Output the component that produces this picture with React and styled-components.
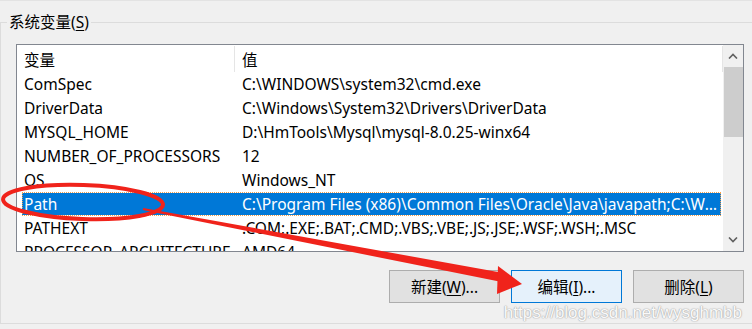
import React from "react";
import styled, { createGlobalStyle } from "styled-components";

const GlobalStyle = createGlobalStyle`
  html, body {
    margin: 0;
    padding: 0;
    background: #f0f0f0;
  }
  body {
    width: 752px;
    height: 329px;
    overflow: hidden;
    font-family: "Noto Sans", "Noto Sans CJK SC", sans-serif;
  }
`;

const vars = [
  ["ComSpec", "C:\\WINDOWS\\system32\\cmd.exe"],
  ["DriverData", "C:\\Windows\\System32\\Drivers\\DriverData"],
  ["MYSQL_HOME", "D:\\HmTools\\Mysql\\mysql-8.0.25-winx64"],
  ["NUMBER_OF_PROCESSORS", "12"],
  ["OS", "Windows_NT"],
  ["Path", "C:\\Program Files (x86)\\Common Files\\Oracle\\Java\\javapath;C:\\WINDOWS\\system32;C:\\WINDOWS"],
  ["PATHEXT", ".COM;.EXE;.BAT;.CMD;.VBS;.VBE;.JS;.JSE;.WSF;.WSH;.MSC"],
  ["PROCESSOR_ARCHITECTURE", "AMD64"],
];

export default function App() {
  return (
    <Page>
      <GlobalStyle />
      <Group>
        <Legend>
          系统变量(<u>S</u>)
        </Legend>
        <ListView>
          <ListContent>
            <Header>
              <HeadCell>变量</HeadCell>
              <HeadCell>值</HeadCell>
            </Header>
            {vars.map(([name, value]) => (
              <Row key={name} selected={name === "Path"}>
                <NameCell>{name}</NameCell>
                <ValueCell>{value}</ValueCell>
              </Row>
            ))}
          </ListContent>
          <ScrollBar>
            <ArrowBtn>
              <svg width="10" height="6" viewBox="0 0 10 6">
                <polyline points="1,5.5 5,1.5 9,5.5" fill="none" stroke="#606060" strokeWidth="1.6" />
              </svg>
            </ArrowBtn>
            <Thumb />
            <Track />
            <ArrowBtn>
              <svg width="10" height="6" viewBox="0 0 10 6">
                <polyline points="1,0.5 5,4.5 9,0.5" fill="none" stroke="#606060" strokeWidth="1.6" />
              </svg>
            </ArrowBtn>
          </ScrollBar>
        </ListView>
        <ButtonRow>
          <Button>
            新建(<u>W</u>)...
          </Button>
          <Button primary>
            编辑(<u>I</u>)...
          </Button>
          <Button>
            删除(<u>L</u>)
          </Button>
        </ButtonRow>
      </Group>
      <Watermark>https://blog.csdn.net/wysghmbb</Watermark>
      <Annotation width="752" height="329" viewBox="0 0 752 329">
        <ellipse
          cx="83"
          cy="201"
          rx="80"
          ry="17"
          fill="none"
          stroke="#f0231b"
          strokeWidth="4"
          transform="rotate(2 83 201)"
        />
        <polygon
          points="143.2,207 500.7,271.5 499.3,280.5 142.8,209"
          fill="#f0231b"
        />
        <polygon points="498,265 522,283 497,293" fill="#f0231b" />
      </Annotation>
    </Page>
  );
}

const Page = styled.div`
  position: relative;
  width: 752px;
  height: 329px;
  box-sizing: border-box;
  border-top: 1px solid #e3e3e3;
`;

const Group = styled.div`
  display: flex;
  flex-direction: column;
  margin-top: 21px;
  height: 302px;
  box-sizing: border-box;
  border: 1px solid #dcdcdc;
  border-right: none;
`;

const Legend = styled.div`
  align-self: flex-start;
  margin: -11px 0 0 6px;
  padding: 0 2px;
  background: #f0f0f0;
  font-size: 15.5px;
  line-height: 20px;
  color: #000;

  u {
    text-underline-offset: 2px;
  }
`;

const ListView = styled.div`
  display: grid;
  grid-template-columns: 1fr 20px;
  margin: 12px 8px 0 15px;
  height: 208px;
  box-sizing: border-box;
  border: 1px solid #828790;
  background: #fff;
`;

const ListContent = styled.div`
  overflow: hidden;
  font-size: 15.5px;
  color: #000;
`;

const Header = styled.div`
  display: grid;
  grid-template-columns: 218px 1fr;
  height: 27px;
`;

const HeadCell = styled.div`
  display: flex;
  align-items: center;
  padding: 2px 0 0 7px;
  margin-top: 1px;
  border-right: 1px solid #e5e5e5;
  line-height: 20px;
`;

const Row = styled.div`
  display: grid;
  grid-template-columns: 213px 1fr;
  margin-left: 5px;
  width: 699px;
  height: 24px;
  box-sizing: border-box;
  border-top: 1px solid transparent;
  border-bottom: 1px solid transparent;
  background-clip: padding-box;
  line-height: 22px;
  background-color: ${(p) => (p.selected ? "#0078d7" : "transparent")};
  color: ${(p) => (p.selected ? "#fff" : "#000")};
  outline: ${(p) => (p.selected ? "1px dotted #f0a050" : "none")};
  outline-offset: -1px;
`;

const NameCell = styled.div`
  padding-left: 2px;
  white-space: nowrap;
  overflow: hidden;
`;

const ValueCell = styled.div`
  padding: 0 1px 0 7px;
  white-space: nowrap;
  overflow: hidden;
  text-overflow: ellipsis;
`;

const ScrollBar = styled.div`
  display: flex;
  flex-direction: column;
  background: #f0f0f0;
`;

const ArrowBtn = styled.div`
  display: flex;
  align-items: center;
  justify-content: center;
  height: 22px;
  flex: none;
`;

const Thumb = styled.div`
  height: 70px;
  margin-left: 1px;
  background: #cdcdcd;
  flex: none;
`;

const Track = styled.div`
  flex: 1;
`;

const ButtonRow = styled.div`
  display: flex;
  justify-content: flex-end;
  gap: 11px;
  margin: 18px 8px 0 0;
`;

const Button = styled.button`
  width: 111px;
  height: 33px;
  padding: 0;
  box-sizing: border-box;
  border: 1px solid ${(p) => (p.primary ? "#0078d7" : "#adadad")};
  background: ${(p) => (p.primary ? "#e5f1fb" : "#e1e1e1")};
  font-family: "Noto Sans", "Noto Sans CJK SC", sans-serif;
  font-size: 15.5px;
  color: #000;

  u {
    text-underline-offset: 2px;
  }
`;

const Watermark = styled.div`
  position: absolute;
  right: 10px;
  bottom: 6px;
  font-family: "Liberation Sans", Arial, sans-serif;
  font-size: 17px;
  color: rgba(255, 255, 255, 0.95);
  text-shadow: 0 0 1px #a8a8a8, 0 0 1px #b0b0b0, 0 0 2px #c8c8c8;
  pointer-events: none;
`;

const Annotation = styled.svg`
  position: absolute;
  left: 0;
  top: 0;
  pointer-events: none;
`;
